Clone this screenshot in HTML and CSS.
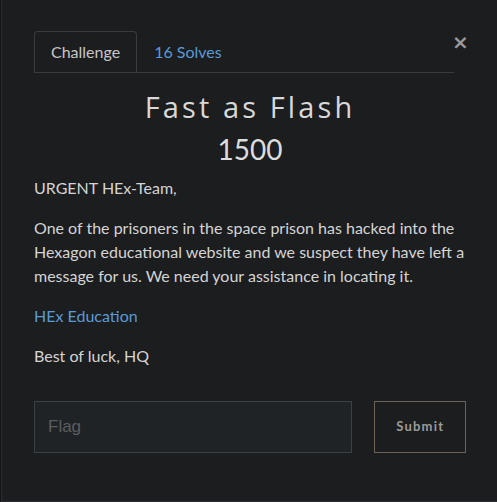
FILE: index.html
```html
<!DOCTYPE html>
<html>
<head>
<meta charset="utf-8">
<link rel="stylesheet" href="styles.css">
</head>
<body>
<div class="modal">
  <div class="header">
    <div class="nav">
      <div class="tab active">Challenge</div>
      <div class="tab link">16 Solves</div>
    </div>
    <div class="close">&times;</div>
  </div>
  <h2 class="title">Fast as Flash</h2>
  <h3 class="value">1500</h3>
  <div class="desc">
    <p>URGENT HEx-Team,</p>
    <p>One of the prisoners in the space prison has hacked into the Hexagon educational website and we suspect they have left a message for us. We need your assistance in locating it.</p>
    <p><a href="#" class="alink">HEx Education</a></p>
    <p>Best of luck, HQ</p>
  </div>
  <div class="form">
    <input class="flag" type="text" placeholder="Flag">
    <button class="submit">Submit</button>
  </div>
</div>
</body>
</html>
```
FILE: styles.css
```css
html, body {
  margin: 0;
  padding: 0;
  background: #111214;
  overflow: hidden;
}
.modal {
  box-sizing: border-box;
  margin-left: 1px;
  width: 496px;
  height: 502px;
  background: #1c1d1f;
  border-left: 1px solid #2c2d30;
  border-bottom: 1px solid #2c2d30;
  padding: 31px 31px 0 32px;
  font-family: Lato, "Noto Sans", sans-serif;
  color: #d4d4d4;
}
.header {
  display: flex;
  align-items: flex-start;
}
.nav {
  display: flex;
  flex: none;
  width: 420px;
  border-bottom: 1px solid #3a3b3d;
}
.tab {
  padding: 8px 16px;
  line-height: 24px;
  font-size: 16px;
  border: 1px solid transparent;
  border-bottom: none;
  border-radius: 4px 4px 0 0;
}
.tab.active {
  border-color: #3a3b3d;
  color: #c6c6c6;
}
.tab.link {
  color: #5a9ad8;
}
.close {
  flex: none;
  margin-left: -2px;
  margin-top: 1px;
  font-family: "DejaVu Sans", sans-serif;
  font-size: 20px;
  line-height: 20px;
  color: #9a9a9a;
  font-weight: bold;
}
.title {
  margin: 16px 0 0;
  text-align: center;
  font-family: "Open Sans", Lato, sans-serif;
  font-weight: 400;
  font-size: 29px;
  letter-spacing: 3.1px;
  line-height: 36px;
  color: #d8d8d8;
}
.value {
  margin: 6px 0 0;
  text-align: center;
  font-weight: 400;
  font-size: 28px;
  line-height: 36px;
  color: #dcdcdc;
}
.desc {
  margin-top: 9px;
  font-size: 16px;
  line-height: 24px;
}
.desc p {
  margin: 0 0 16px;
}
.alink {
  color: #5a9ad8;
  text-decoration: none;
}
.form {
  display: flex;
  margin-top: 33px;
}
.flag {
  box-sizing: border-box;
  width: 320px;
  height: 52px;
  background: #202326;
  border: 1px solid #3d4043;
  padding: 0 13px;
  font-family: "Liberation Sans", Arial, sans-serif;
  font-size: 17px;
  color: #ccc;
  outline: none;
}
.flag::placeholder {
  color: #5b5d5f;
}
.submit {
  box-sizing: border-box;
  margin-left: 22px;
  width: 92px;
  height: 52px;
  background: #1c1d1f;
  border: 1px solid #6b6357;
  color: #9b9b9b;
  font-family: Lato, sans-serif;
  font-weight: 700;
  font-size: 13px;
  letter-spacing: 1.2px;
  padding: 0 0 3px;
}
```
